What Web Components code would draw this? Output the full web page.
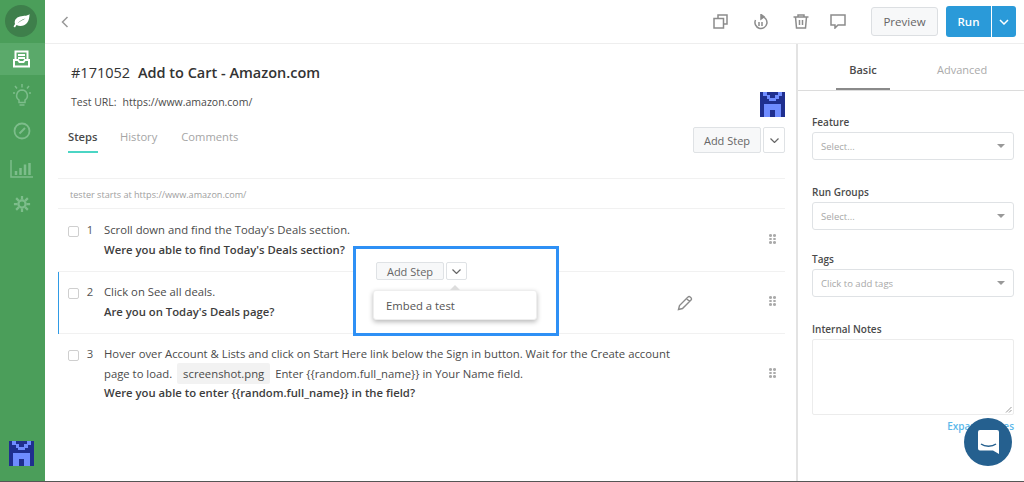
<!DOCTYPE html>
<html><head><meta charset="utf-8"><style>
html,body{margin:0;padding:0;height:100%;overflow:hidden;background:#fff}
body{font-family:"Open Sans",sans-serif;color:#4a4a4a}
</style></head><body>
<template id="logo-t"><style>:host{display:block;width:25px;height:25px}svg{display:block;width:100%;height:100%}</style>
<svg viewBox="0 0 25 25" shape-rendering="crispEdges"><rect width="25" height="25" rx="1" fill="#1f2f8f"/><path fill="#6f8cff" d="M3 0h4v3h3v3h5V3h3V0h4v4h-3v3h-3v2h-7V7H7V4H3zM4 12h17v13h-6v-7h-5v7H4z"/></svg></template>

<template id="side-t"><style>
:host{display:flex;flex-direction:column;width:45px;flex:none;background:#4b9e5a;align-items:stretch;position:relative}
.leaf{height:43px;display:flex;align-items:center;justify-content:center}
.leaf i{display:flex;width:32px;height:32px;border-radius:50%;background:#3e7f4b;align-items:center;justify-content:center;margin:-1px 3px 0 0}
.it{height:32px;display:flex;align-items:center;justify-content:center;margin-bottom:4px;padding-right:2px}
.it.on{background:#5aa96a;margin-bottom:4px}
svg{display:block;fill:none;stroke:#7dbd8b;stroke-width:1.500}
.on svg{stroke:#fff;stroke-width:2}
.sp{flex:1}.bot{display:flex;justify-content:center;padding:0 2px 15px 0}
</style>
<div class="leaf"><i><svg width="17" height="14" viewBox="0 0 17 14" style="stroke:none"><path fill="#fff" d="M16.500 0C15 2 11 1.500 7 2.500 3 3.500 1 6.500 2 10L.5 12.500 2 13.500 3.500 11C7 13 11.500 12 14 9 16 6.500 16.500 3 16.500 0ZM4.500 9.500C6.500 7 9 5.500 12.500 4.500 9.500 6 7 7.500 4.500 9.500Z"/></svg></i></div>
<div class="it on"><svg width="17" height="18" viewBox="0 0 17 18"><path d="M2.500 9V1.500h12V9M5 5h7M5 8h7M1 10h4l1.500 2h4L12 10h4v6.500H1z"/></svg></div>
<div class="it"><svg width="18" height="24" viewBox="0 0 18 24" style="margin-top:2px"><path d="M9 6a5.500 5.500 0 0 0-3 10v2.500h6V16A5.500 5.500 0 0 0 9 6zM6.500 21h5M9 0v3.500M2 2l2 2.500M16 2l-2 2.500M0 9h2M16 9h2"/></svg></div>
<div class="it"><svg width="18" height="18" viewBox="0 0 18 18"><circle cx="9" cy="9" r="7.500" stroke-width="1.800"/><path d="M6.500 11.500L12 6" stroke-width="2"/></svg></div>
<div class="it"><svg width="24" height="18" viewBox="0 0 24 18" style="margin-top:3px"><path d="M1 0v17h22"/><path stroke-width="2.500" d="M6 15v-4M10.500 15V8M15 15V4.500M19.500 15V3"/></svg></div>
<div class="it"><svg width="18" height="18" viewBox="0 0 20 20" style="margin-top:2px"><circle cx="10" cy="10" r="4" stroke-width="2.500"/><path stroke-width="2.500" d="M10 1v4M10 15v4M1 10h4M15 10h4M3.500 3.500l3 3M13.500 13.500l3 3M16.500 3.500l-3 3M6.500 13.500l-3 3"/></svg></div>
<div class="sp"></div><div class="bot"><t-logo></t-logo></div></template>

<template id="tbar-t"><style>
:host{display:flex;height:43px;align-items:center;border-bottom:1px solid #eeeeee;box-sizing:content-box;flex:none;padding:0 8px 0 15px}
svg{display:block;fill:none;stroke:#8c8c8c;stroke-width:1.500}
.sp{flex:1}
.ic{display:flex;align-items:center;gap:25px;margin-right:25px}
.pv{width:67px;height:29px;box-sizing:border-box;border:1px solid #dcdfe2;border-radius:3px;background:#f7f8f9;font-size:11.500px;font-weight:500;color:#666;display:flex;align-items:center;justify-content:center;margin-right:8px}
.run{width:45px;height:31px;background:#2a9ad9;color:#fff;font-size:11.500px;font-weight:600;display:flex;align-items:center;justify-content:center;border-radius:3px 0 0 3px;margin-right:1px}
.dd{width:24px;height:31px;background:#2a9ad9;border-radius:0 3px 3px 0;display:flex;align-items:center;justify-content:center}
.dd svg{stroke:#fff}
</style>
<svg width="8" height="12" viewBox="0 0 8 12" style="stroke:#999;margin-left:1px"><path d="M6.500 1L1.500 6l5 5"/></svg>
<div class="sp"></div>
<div class="ic">
<svg width="15" height="15" viewBox="0 0 15 15"><path d="M5 4V1h9v9h-3M1 4.500h9.500V14H1z"/></svg>
<svg width="15" height="16" viewBox="0 0 15 16"><path d="M8.500 2.500A6 6 0 1 1 2.500 6M8 .5v4.500l3-2.200zM6 8v4M9 8v4"/></svg>
<svg width="16" height="15" viewBox="0 0 16 15"><path d="M.5 3h15M5 3V1h6v2M2.500 3l1 11h9l1-11M6.500 6v5M9.500 6v5"/></svg>
<svg width="16" height="15" viewBox="0 0 16 15" style="margin-left:-4px"><path d="M1 1h14v10H8l-3 3v-3H1z"/></svg>
</div>
<div class="pv">Preview</div><div class="run">Run</div>
<div class="dd"><svg width="10" height="6" viewBox="0 0 10 6"><path d="M1 1l4 4 4-4"/></svg></div></template>

<template id="add-t"><style>
:host{display:flex;gap:2px;align-items:stretch;color:#666;font-weight:500;font-size:11px}
.a{box-sizing:border-box;display:flex;align-items:center;justify-content:center;border:1px solid #dfe2e5;border-radius:2px;background:#f7f8f9}
.b{box-sizing:border-box;display:flex;align-items:center;justify-content:center;border:1px solid #dfe2e5;border-radius:2px;background:#fff}
svg{fill:none;stroke:#666;stroke-width:1.200;display:block}
</style><div class="a" part="a">Add Step</div><div class="b" part="b"><svg width="9" height="5" viewBox="0 0 9 5"><path d="M.5.500l4 4 4-4"/></svg></div></template>

<template id="step-t"><style>
:host{display:flex;box-sizing:border-box;border-bottom:1px solid #f1f1f1;padding:11px 0 0 0;position:relative}
.cb{width:9px;height:9px;border:1px solid #cfcfcf;border-radius:2px;margin:6px 0 0 10px;flex:none;box-sizing:content-box}
.n{width:22px;text-align:center;font-size:11.300px;flex:none;line-height:19.500px;color:#555}
.t{width:574px;margin-left:3px;font-size:11.300px;line-height:19.500px;color:#4a4a4a}
.h{position:absolute;right:9px;top:var(--ht,25px);width:7px;height:10px;display:grid;grid-template-columns:3px 3px;gap:1px;grid-auto-rows:2.500px}
.h i{background:#aaa;border-radius:50%}
</style><div class="cb"></div><div class="n"><slot name="n"></slot></div><div class="t"><slot></slot></div><div class="h"><i></i><i></i><i></i><i></i><i></i><i></i></div></template>

<template id="field-t"><style>
:host{display:block;margin-left:14px;width:202px}
.l{font-size:10px;font-weight:600;color:#4a4a4a;line-height:14px;margin-bottom:3px}
.s{box-sizing:border-box;height:28px;border:1px solid #dfe2e5;border-radius:3px;font-size:9.500px;color:#a8a8a8;display:flex;align-items:center;justify-content:space-between;padding:0 8px}
.s i{width:0;height:0;border:4px solid transparent;border-top:4px solid #999;border-bottom:0}
</style><div class="l"><slot name="l"></slot></div><div class="s"><slot></slot><i></i></div></template>

<template id="panel-t"><style>
:host{display:block;width:228px;flex:none;border-left:2px solid #e3e3e3;position:relative;height:100%;box-sizing:border-box}
.tabs{display:flex;height:46px;border-bottom:1px solid #dcdcdc;font-size:11px}
.tabs div{display:flex;align-items:center;justify-content:center;height:46px;box-sizing:border-box;padding-top:6px}
.x{width:54px;margin-left:38px;font-weight:600;color:#4a4a4a;border-bottom:2px solid #8a8a8a}
.tabs .y{margin-left:47px;color:#aaa;padding-top:4px}
.ns{display:flex;flex-direction:column;padding-top:24px}
t-field{margin-bottom:25px}
t-field.g{margin-bottom:22px}
.nl{margin-left:14px;font-size:10px;font-weight:600;line-height:14px;margin-bottom:3px}
.ta{box-sizing:border-box;margin-left:14px;width:202px;height:76px;border:1px solid #ececec;border-radius:2px;position:relative}
.ta svg{position:absolute;right:1px;bottom:1px}
.ex{margin:4px 0 0 14px;width:202px;text-align:right;font-size:10px;color:#5cb8ea;font-weight:600}
</style><div class="tabs"><div class="x">Basic</div><div class="y">Advanced</div></div>
<div class="ns">
<t-field><span slot="l">Feature</span>Select...</t-field>
<t-field class="g"><span slot="l">Run Groups</span>Select...</t-field>
<t-field><span slot="l">Tags</span>Click to add tags</t-field>
<div class="nl">Internal Notes</div>
<div class="ta"><svg width="7" height="7" viewBox="0 0 7 7" fill="none" stroke="#999"><path d="M1 6.500L6.500 1M4 6.500L6.500 4"/></svg></div>
<div class="ex">Expand Notes</div></div></template>

<template id="chat-t"><style>
:host{display:flex;position:absolute;left:964px;top:418px;width:48px;height:48px;border-radius:50%;background:#25608f;align-items:center;justify-content:center}
</style><svg width="23" height="26" viewBox="0 0 23 26"><path fill="#fff" d="M3 1h17a2 2 0 0 1 2 2v22l-6-3.500H3a2 2 0 0 1-2-2V3a2 2 0 0 1 2-2z"/><path d="M4 15c4 3 11 3 15 0" fill="none" stroke="#25608f" stroke-width="1.500"/></svg></template>

<template id="callout-t"><style>
:host{display:block;position:absolute;left:353px;top:246px;width:206px;height:90px;box-sizing:border-box;border:3px solid #2e90f5;background:#fff}
.w{padding:13px 0 0 20px}
t-add::part(a){width:68px;height:18px}t-add::part(b){width:21px;height:18px}
.m{position:relative;margin:10px 0 0 -3px;width:164px;height:30px;box-sizing:border-box;background:#fff;border:1px solid #eee;border-radius:3px;box-shadow:0 2px 5px rgba(0,0,0,.28);font-size:11.300px;color:#555;display:flex;align-items:center;padding-left:12px}
.m::before{content:"";position:absolute;left:76px;top:-6px;border:5px solid transparent;border-top:0;border-bottom:5px solid #ddd}
</style><div class="w"><t-add></t-add><div class="m">Embed a test</div></div></template>

<template id="main-t"><style>
:host{display:flex;flex-direction:column;flex:1;min-width:0}
.head{padding:19px 11px 0 26px;display:flex;flex-direction:column}
h1{margin:0;font-size:14.500px;font-weight:600;line-height:20px;color:#333}
h1 span{font-weight:400;margin-right:4px}
.url{margin-top:11px;font-size:10.500px;line-height:16px;display:flex;justify-content:space-between;color:#4a4a4a;height:19px;align-items:flex-start}
.url span+span{margin-left:6px}
t-logo{margin-top:-2px}
.row{display:flex;align-items:flex-start;justify-content:space-between;margin-top:12px;margin-left:-3px}
.tabs{display:flex;gap:23px;font-size:11.200px;color:#a5a5a5}
.tabs div{padding-top:3px;line-height:18px;box-sizing:border-box;height:28px}
.tabs div:nth-child(2){margin:0 1px 0 -1px}
.tabs .on{font-weight:600;color:#4a4a4a;border-bottom:2px solid #4bd5c4;width:30px}
t-add{margin-top:2px}
t-add::part(a){width:68px;height:26px}t-add::part(b){width:22px;height:26px}
.steps{margin:25px 11px 0 13px;border-top:1px solid #f1f1f1}
.start{height:30px;box-sizing:border-box;border-bottom:1px solid #f1f1f1;font-size:9.100px;color:#a0a0a0;padding:9px 0 0 12px;line-height:14px}
b{font-weight:600;color:#3d3d3d}
.s1{height:63px}.s2{height:62px;padding-top:10px;--ht:24px}
.s2bar{position:absolute;left:0;top:0;bottom:-1px;width:1px;background:#2f9be6}
.pen{position:absolute;left:619px;top:23px}
.s3{border-bottom:0;padding-top:10px;--ht:34px}
.chip{display:inline-block;position:relative;z-index:0;padding:0 6px;margin:0 2px 0 2px}
.chip::before{content:"";position:absolute;z-index:-1;left:0;right:0;top:-1px;bottom:-1px;background:#f2f2f2;border-radius:2px}
</style>
<div class="head">
<h1><span>#171052</span> Add to Cart - Amazon.com</h1>
<div class="url"><div><span>Test URL:</span><span>https://www.amazon.com/</span></div><t-logo></t-logo></div>
<div class="row"><div class="tabs"><div class="on">Steps</div><div>History</div><div>Comments</div></div><t-add></t-add></div>
</div>
<div class="steps">
<div class="start">tester starts at https://www.amazon.com/</div>
<t-step class="s1"><span slot="n">1</span>Scroll down and find the Today's Deals section.<br><b>Were you able to find Today's Deals section?</b></t-step>
<t-step class="s2"><div class="s2bar" slot="n"></div><span slot="n">2</span>Click on See all deals.<br><b>Are you on Today's Deals page?</b><svg class="pen" width="16" height="16" viewBox="0 0 16 16" fill="none" stroke="#8c8c8c" stroke-width="1.400"><path d="M1.500 14.500l1-4L11 2a1.500 1.500 0 0 1 2.200 0l.8.800a1.500 1.500 0 0 1 0 2.200l-8.500 8.500zM9.500 3.500l3 3"/></svg></t-step>
<t-step class="s3"><span slot="n">3</span>Hover over Account &amp; Lists and click on Start Here link below the Sign in button. Wait for the Create account<br>page to load. <span class="chip">screenshot.png</span> Enter {{random.full_name}} in Your Name field.<br><b>Were you able to enter {{random.full_name}} in the field?</b></t-step>
</div></template>

<template id="app-t"><style>
:host{display:flex;width:1024px;height:482px;position:relative;overflow:hidden;box-sizing:border-box;border-bottom:1px solid #555}
.c{flex:1;display:flex;flex-direction:column;min-width:0}.b{flex:1;display:flex;min-height:0}
</style><t-side></t-side><div class="c"><t-tbar></t-tbar><div class="b"><t-main></t-main><t-panel></t-panel></div></div><t-callout></t-callout><t-chat></t-chat></template>

<t-app></t-app>
<script>
for(const [n,id] of [['t-logo','logo-t'],['t-side','side-t'],['t-tbar','tbar-t'],['t-add','add-t'],['t-step','step-t'],['t-field','field-t'],['t-panel','panel-t'],['t-chat','chat-t'],['t-callout','callout-t'],['t-main','main-t'],['t-app','app-t']]){
 customElements.define(n,class extends HTMLElement{constructor(){super();this.attachShadow({mode:'open'}).appendChild(document.getElementById(id).content.cloneNode(true));}});
}
</script>
</body></html>
